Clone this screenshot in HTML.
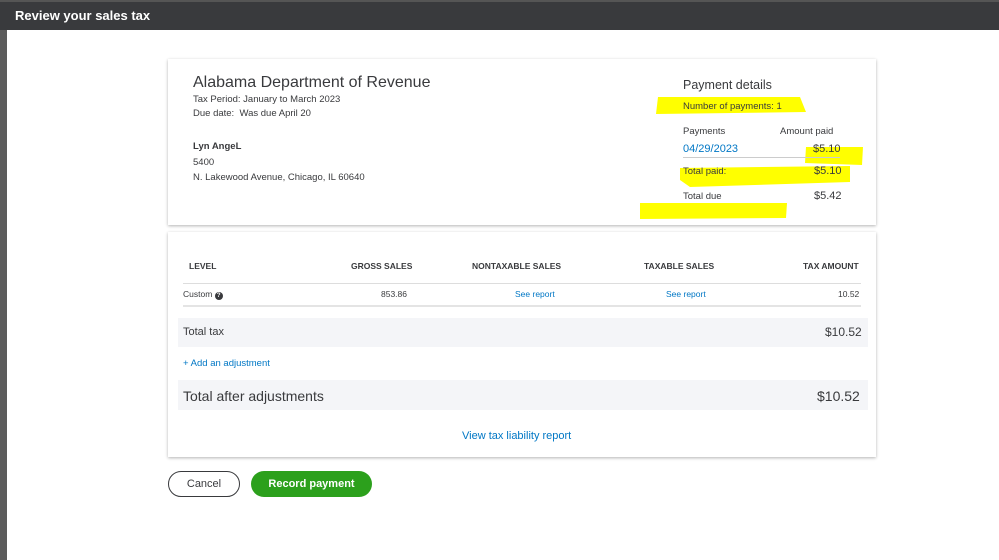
<!DOCTYPE html>
<html><head><meta charset="utf-8"><style>
*{box-sizing:border-box;margin:0;padding:0}
body{width:999px;height:560px;background:#fff;font-family:"Liberation Sans",sans-serif;color:#393a3d;position:relative;overflow:hidden}
.top{position:absolute;left:0;top:0;width:999px;height:30px;background:#393a3d;border-top:2px solid #555}
.top span{position:absolute;left:15px;top:6px;color:#fff;font-weight:bold;font-size:13px}
.lstrip{position:absolute;left:0;top:0;width:7px;height:560px;background:#5c5c5c}
.card{position:absolute;left:168px;width:708px;background:#fff;box-shadow:0 1px 3px rgba(0,0,0,.3)}
.abs{position:absolute;white-space:nowrap}
.s{font-size:10px;color:#393a3d}
.blue{color:#0077c5}
.h{font-size:8.5px;font-weight:bold;color:#393a3d}
</style></head><body>
<div class="lstrip"></div>
<div class="top"><span>Review your sales tax</span></div>

<div class="card" style="top:59px;height:166px">
 <div class="abs" style="left:25px;top:15px;font-size:16px">Alabama Department of Revenue</div>
 <div class="abs s" style="left:25px;top:35px;font-size:9.5px">Tax Period: January to March 2023</div>
 <div class="abs s" style="left:25px;top:49px;font-size:9.5px">Due date:&nbsp; Was due April 20</div>
 <div class="abs s" style="left:25px;top:82px;font-size:9.5px;font-weight:bold">Lyn AngeL</div>
 <div class="abs s" style="left:25px;top:98px;font-size:9.5px">5400</div>
 <div class="abs s" style="left:25px;top:113px;font-size:9.5px">N. Lakewood Avenue, Chicago, IL 60640</div>
</div>
<svg style="position:absolute;left:0;top:0" width="999" height="560">
 <path d="M658 97 L800 97 L806 112 L656 114 Z" fill="#ffff00"/>
 <path d="M806 147 L863 147 L862 165 L805 163 Z" fill="#ffff00"/>
 <path d="M680 168 L850 166 L850 182 L690 187 L680 180 Z" fill="#ffff00"/>
 <path d="M640 203 L787 203 L786 218 L640 219 Z" fill="#ffff00"/>
</svg>
<div class="abs" style="left:683px;top:78px;font-size:12.5px;color:#393a3d">Payment details</div>
<div class="abs s" style="left:683px;top:101px;font-size:9.5px">Number of payments: 1</div>
<div class="abs s" style="left:683px;top:126px;font-size:9.5px">Payments</div>
<div class="abs s" style="left:780px;top:126px;font-size:9.5px">Amount paid</div>
<div class="abs blue" style="left:683px;top:143px;font-size:11px">04/29/2023</div>
<div class="abs s" style="left:813px;top:143px;font-size:11px">$5.10</div>
<div style="position:absolute;left:683px;top:157px;width:157px;height:1px;background:#ccc"></div>
<div class="abs s" style="left:683px;top:166px;font-size:9.5px">Total paid:</div>
<div class="abs s" style="left:814px;top:165px;font-size:11px">$5.10</div>
<div class="abs s" style="left:683px;top:191px;font-size:9.5px">Total due</div>
<div class="abs s" style="left:814px;top:190px;font-size:11px">$5.42</div>

<div class="card" style="top:232px;height:225px">
 <div class="abs h" style="left:21px;top:29px">LEVEL</div>
 <div class="abs h" style="left:183px;top:29px">GROSS SALES</div>
 <div class="abs h" style="left:304px;top:29px">NONTAXABLE SALES</div>
 <div class="abs h" style="left:476px;top:29px">TAXABLE SALES</div>
 <div class="abs h" style="left:635px;top:29px">TAX AMOUNT</div>
 <div style="position:absolute;left:15px;top:51px;width:678px;height:1px;background:#ddd"></div>
 <div class="abs" style="left:15px;top:57px;font-size:8.5px;line-height:11px">Custom <span style="display:inline-block;width:8px;height:8px;border-radius:50%;background:#393a3d;color:#fff;font-size:6px;text-align:center;line-height:8px;font-weight:bold;vertical-align:0">?</span></div>
 <div class="abs" style="left:213px;top:57px;font-size:8.5px">853.86</div>
 <div class="abs blue" style="left:347px;top:57px;font-size:8.5px">See report</div>
 <div class="abs blue" style="left:498px;top:57px;font-size:8.5px">See report</div>
 <div class="abs" style="left:670px;top:57px;font-size:8.5px">10.52</div>
 <div style="position:absolute;left:15px;top:73px;width:678px;height:2px;background:#e4e4e4"></div>
 <div style="position:absolute;left:10px;top:86px;width:690px;height:29px;background:#f4f5f8"></div>
 <div class="abs" style="left:15px;top:94px;font-size:11px">Total tax</div>
 <div class="abs" style="left:657px;top:93px;font-size:12px">$10.52</div>
 <div class="abs blue" style="left:15px;top:126px;font-size:9.5px">+ Add an adjustment</div>
 <div style="position:absolute;left:10px;top:148px;width:690px;height:30px;background:#f4f5f8"></div>
 <div class="abs" style="left:15px;top:156px;font-size:14px">Total after adjustments</div>
 <div class="abs" style="left:649px;top:156px;font-size:14px">$10.52</div>
 <div class="abs blue" style="left:294px;top:198px;font-size:11px">View tax liability report</div>
</div>

<div style="position:absolute;left:168px;top:471px;width:72px;height:26px;border:1.5px solid #393a3d;border-radius:14px;font-size:11px;text-align:center;line-height:24px">Cancel</div>
<div style="position:absolute;left:251px;top:471px;width:121px;height:26px;background:#2ca01c;border-radius:14px;color:#fff;font-weight:bold;font-size:11px;text-align:center;line-height:26px">Record payment</div>
</body></html>
